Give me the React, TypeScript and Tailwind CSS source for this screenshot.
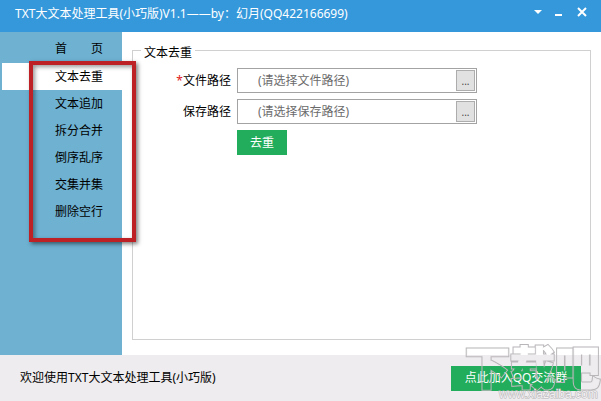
import { useState } from "react";

const pages = ["文本去重", "文本追加", "拆分合并", "倒序乱序", "交集并集", "删除空行"];

function PathRow({ id, label, hint, required }: { id: string; label: string; hint: string; required?: boolean }) {
  return (
    <div className="flex items-center gap-[6px]">
      <label htmlFor={id} className="w-[98px] text-right">
        {required && <span className="text-[#e02020]">*</span>}
        {label}
      </label>
      <div className="flex h-[25px] w-[240px] items-center border border-[#a3a3a3] bg-white pr-px">
        <input
          id={id}
          type="text"
          placeholder={hint}
          className="h-full min-w-0 flex-1 bg-transparent pl-5 outline-none placeholder:text-[#6b6b6b]"
        />
        <button
          type="button"
          aria-label={`浏览${label}`}
          className="h-[21px] w-[19px] border border-[#adadad] bg-[#e1e1e1] text-[10px] leading-[18px] text-[#444]"
        >
          ...
        </button>
      </div>
    </div>
  );
}

export default function App() {
  const [active, setActive] = useState("文本去重");

  return (
    <div className="relative flex min-h-screen flex-col bg-white font-['Noto_Sans','Noto_Sans_CJK_SC',sans-serif] text-[12px] leading-[18px] text-black">
      <header className="flex h-8 items-center bg-[#3498db] pr-[13px] pl-[15px] text-white">
        <h1 className="flex-1 pb-1 whitespace-nowrap">TXT大文本处理工具(小巧版)V1.1——by：幻月(QQ422166699)</h1>
        <div className="flex items-center gap-[10px] pb-2">
          <button type="button" aria-label="菜单">
            <svg width="12" height="12" viewBox="0 0 12 12" fill="currentColor">
              <path d="M2 4h8L6 8z" />
            </svg>
          </button>
          <button type="button" aria-label="最小化">
            <svg width="10" height="12" viewBox="0 0 10 12" fill="currentColor">
              <path d="M1 8h7v2H1z" />
            </svg>
          </button>
          <button type="button" aria-label="关闭" className="pl-[2px]">
            <svg width="12" height="12" viewBox="0 0 12 12" fill="none" stroke="currentColor" strokeWidth="2">
              <path d="M2 2l8 8M10 2l-8 8" />
            </svg>
          </button>
        </div>
      </header>

      <main className="flex flex-1">
        <nav className="flex w-[122px] flex-col bg-[#6eb1d1] pt-[3px] pl-[2px]">
          <button type="button" className="flex h-7 items-center pl-[53px]" onClick={() => setActive("首页")}>
            <span className="flex w-12 justify-between">
              <span>首</span>
              <span>页</span>
            </span>
          </button>
          {pages.map((name) => (
            <button
              key={name}
              type="button"
              onClick={() => setActive(name)}
              className={`h-[27px] pl-[53px] text-left ${active === name ? "bg-white" : ""}`}
            >
              {name}
            </button>
          ))}
        </nav>

        <section className="flex min-w-0 flex-1 pt-[6px] pr-[10px] pb-[15px] pl-[10px]">
          <fieldset className="min-w-0 flex-1 border border-[#d0d0d0]">
            <legend className="ml-2 px-[3px] pt-[6px]">文本去重</legend>
            <div className="flex flex-col gap-[6px] pt-[6px]">
              <PathRow id="source" label="文件路径" hint="(请选择文件路径)" required />
              <PathRow id="target" label="保存路径" hint="(请选择保存路径)" />
              <button type="button" className="ml-[104px] h-[25px] w-[50px] bg-[#22ad5c] text-white">
                去重
              </button>
            </div>
          </fieldset>
        </section>
      </main>

      <footer className="flex h-[46px] items-center justify-between bg-[#eeecee] pr-5 pl-5">
        <p>欢迎使用TXT大文本处理工具(小巧版)</p>
        <button type="button" className="h-[25px] w-[130px] bg-[#22ad5c] text-white">
          点此加入QQ交流群
        </button>
      </footer>

      <div className="pointer-events-none absolute top-[61px] left-[29px] h-[181px] w-[107px] border-4 border-[#bd2025] shadow-[2px_2px_4px_rgba(0,0,0,0.5),inset_2px_2px_4px_rgba(0,0,0,0.4)]" />

      <div className="pointer-events-none absolute right-0 bottom-0">
        <svg width="138" height="70" viewBox="0 0 138 70" fill="none">
          <defs>
            <mask id="outline" maskUnits="userSpaceOnUse" x="0" y="0" width="138" height="70">
              <rect width="138" height="70" fill="white" />
              <text x="2" y="54" fontSize="45" fontFamily="Noto Sans CJK SC, sans-serif" fontWeight="900" fill="black" stroke="black" strokeWidth="1">
                下载吧
              </text>
            </mask>
          </defs>
          <text
            x="2"
            y="54"
            fontSize="45"
            fontFamily="Noto Sans CJK SC, sans-serif"
            fontWeight="900"
            stroke="#b9b6b9"
            strokeWidth="3"
            mask="url(#outline)"
          >
            下载吧
          </text>
          <text x="36" y="67" fontSize="12" fontFamily="Liberation Sans, sans-serif" fill="#f2f0f2" stroke="#b4b2b4" strokeWidth="1" paintOrder="stroke">
            www.xiazaiba.com
          </text>
        </svg>
      </div>
    </div>
  );
}
